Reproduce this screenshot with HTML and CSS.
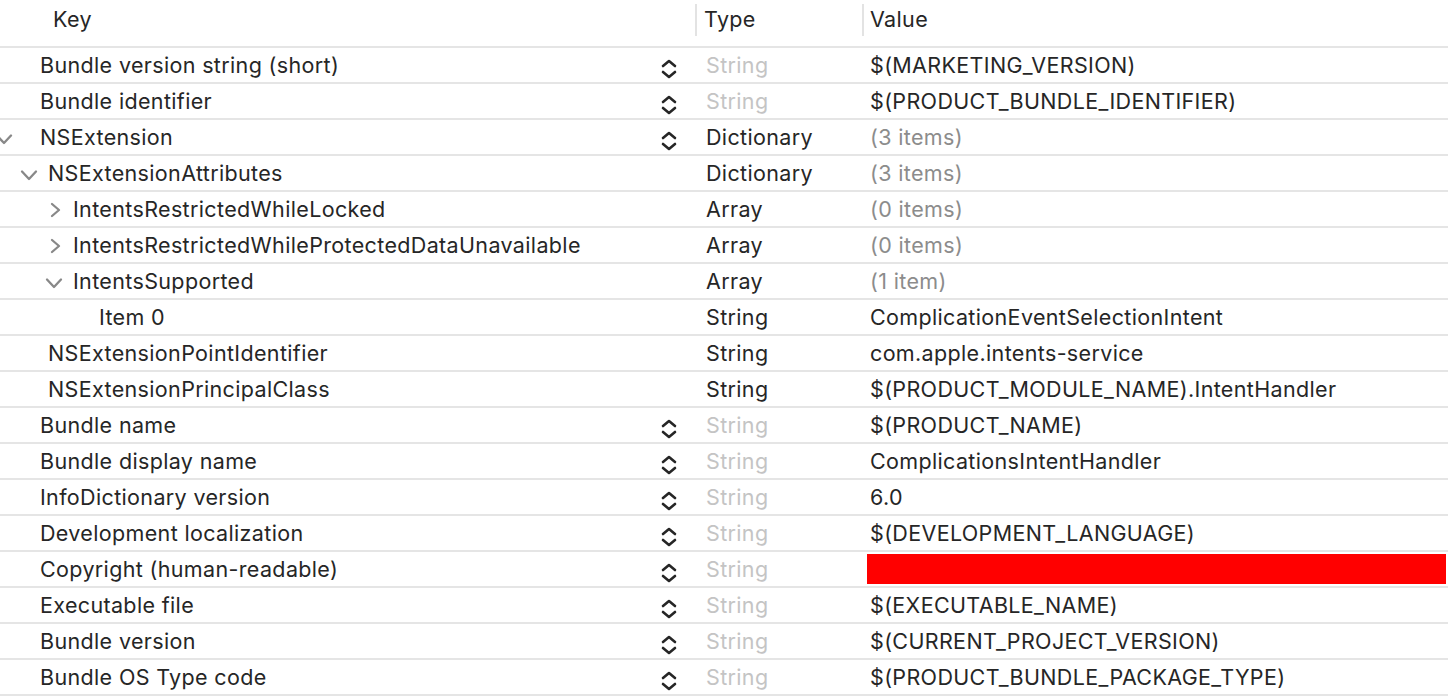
FILE: index.html
```html
<!DOCTYPE html>
<html>
<head>
<meta charset="utf-8">
<link rel="stylesheet" href="styles.css">
</head>
<body>
<div class="table">
  <div class="header">
    <div class="hcell hkey">Key</div>
    <div class="hcell htype">Type</div>
    <div class="hcell hvalue">Value</div>
  </div>

  <div class="row">
    <div class="key l0"><span class="name">Bundle version string (short)</span><svg class="stepper" viewBox="0 0 16 20"><path d="M2 7 L8 2 L14 7 M2 13 L8 18 L14 13"/></svg></div>
    <div class="type dim">String</div>
    <div class="value">$(MARKETING_VERSION)</div>
  </div>
  <div class="row">
    <div class="key l0"><span class="name">Bundle identifier</span><svg class="stepper" viewBox="0 0 16 20"><path d="M2 7 L8 2 L14 7 M2 13 L8 18 L14 13"/></svg></div>
    <div class="type dim">String</div>
    <div class="value">$(PRODUCT_BUNDLE_IDENTIFIER)</div>
  </div>
  <div class="row">
    <div class="key l0"><svg class="disc root" viewBox="0 0 22 12"><path d="M4 2.5 L11 10 L18 2.5"/></svg><span class="name">NSExtension</span><svg class="stepper" viewBox="0 0 16 20"><path d="M2 7 L8 2 L14 7 M2 13 L8 18 L14 13"/></svg></div>
    <div class="type">Dictionary</div>
    <div class="value muted">(3 items)</div>
  </div>
  <div class="row">
    <div class="key l1"><svg class="disc" viewBox="0 0 22 12"><path d="M4 2.5 L11 10 L18 2.5"/></svg><span class="name">NSExtensionAttributes</span></div>
    <div class="type">Dictionary</div>
    <div class="value muted">(3 items)</div>
  </div>
  <div class="row">
    <div class="key l2"><svg class="disc right" viewBox="0 0 22 16"><path d="M9 2 L16 8 L9 14"/></svg><span class="name">IntentsRestrictedWhileLocked</span></div>
    <div class="type">Array</div>
    <div class="value muted">(0 items)</div>
  </div>
  <div class="row">
    <div class="key l2"><svg class="disc right" viewBox="0 0 22 16"><path d="M9 2 L16 8 L9 14"/></svg><span class="name">IntentsRestrictedWhileProtectedDataUnavailable</span></div>
    <div class="type">Array</div>
    <div class="value muted">(0 items)</div>
  </div>
  <div class="row">
    <div class="key l2"><svg class="disc" viewBox="0 0 22 12"><path d="M4 2.5 L11 10 L18 2.5"/></svg><span class="name">IntentsSupported</span></div>
    <div class="type">Array</div>
    <div class="value muted">(1 item)</div>
  </div>
  <div class="row">
    <div class="key l3"><span class="spacer"></span><span class="name">Item 0</span></div>
    <div class="type">String</div>
    <div class="value">ComplicationEventSelectionIntent</div>
  </div>
  <div class="row">
    <div class="key l1"><span class="spacer"></span><span class="name">NSExtensionPointIdentifier</span></div>
    <div class="type">String</div>
    <div class="value">com.apple.intents-service</div>
  </div>
  <div class="row">
    <div class="key l1"><span class="spacer"></span><span class="name">NSExtensionPrincipalClass</span></div>
    <div class="type">String</div>
    <div class="value">$(PRODUCT_MODULE_NAME).IntentHandler</div>
  </div>
  <div class="row">
    <div class="key l0"><span class="name">Bundle name</span><svg class="stepper" viewBox="0 0 16 20"><path d="M2 7 L8 2 L14 7 M2 13 L8 18 L14 13"/></svg></div>
    <div class="type dim">String</div>
    <div class="value">$(PRODUCT_NAME)</div>
  </div>
  <div class="row">
    <div class="key l0"><span class="name">Bundle display name</span><svg class="stepper" viewBox="0 0 16 20"><path d="M2 7 L8 2 L14 7 M2 13 L8 18 L14 13"/></svg></div>
    <div class="type dim">String</div>
    <div class="value">ComplicationsIntentHandler</div>
  </div>
  <div class="row">
    <div class="key l0"><span class="name">InfoDictionary version</span><svg class="stepper" viewBox="0 0 16 20"><path d="M2 7 L8 2 L14 7 M2 13 L8 18 L14 13"/></svg></div>
    <div class="type dim">String</div>
    <div class="value">6.0</div>
  </div>
  <div class="row">
    <div class="key l0"><span class="name">Development localization</span><svg class="stepper" viewBox="0 0 16 20"><path d="M2 7 L8 2 L14 7 M2 13 L8 18 L14 13"/></svg></div>
    <div class="type dim">String</div>
    <div class="value">$(DEVELOPMENT_LANGUAGE)</div>
  </div>
  <div class="row">
    <div class="key l0"><span class="name">Copyright (human-readable)</span><svg class="stepper" viewBox="0 0 16 20"><path d="M2 7 L8 2 L14 7 M2 13 L8 18 L14 13"/></svg></div>
    <div class="type dim">String</div>
    <div class="value redact-cell"><div class="redact"></div></div>
  </div>
  <div class="row">
    <div class="key l0"><span class="name">Executable file</span><svg class="stepper" viewBox="0 0 16 20"><path d="M2 7 L8 2 L14 7 M2 13 L8 18 L14 13"/></svg></div>
    <div class="type dim">String</div>
    <div class="value">$(EXECUTABLE_NAME)</div>
  </div>
  <div class="row">
    <div class="key l0"><span class="name">Bundle version</span><svg class="stepper" viewBox="0 0 16 20"><path d="M2 7 L8 2 L14 7 M2 13 L8 18 L14 13"/></svg></div>
    <div class="type dim">String</div>
    <div class="value">$(CURRENT_PROJECT_VERSION)</div>
  </div>
  <div class="row">
    <div class="key l0"><span class="name">Bundle OS Type code</span><svg class="stepper" viewBox="0 0 16 20"><path d="M2 7 L8 2 L14 7 M2 13 L8 18 L14 13"/></svg></div>
    <div class="type dim">String</div>
    <div class="value">$(PRODUCT_BUNDLE_PACKAGE_TYPE)</div>
  </div>
</div>
</body>
</html>
```

FILE: styles.css
```css
html, body {
  margin: 0;
  padding: 0;
  background: #ffffff;
  overflow: hidden;
}
body {
  font-family: "Inter", "Noto Sans", sans-serif;
  font-size: 21.5px;
  letter-spacing: 0.35px;
  color: #262626;
  width: 1448px;
  height: 696px;
}
.table {
  display: flex;
  flex-direction: column;
}
.header {
  display: grid;
  grid-template-columns: 695px 167px 1fr;
  height: 46px;
  border-bottom: 2px solid #e5e5e5;
  box-sizing: content-box;
}
.hcell {
  display: flex;
  align-items: center;
  height: 32px;
  margin-top: 4px;
  line-height: 1;
}
.hkey { padding-left: 53px; }
.htype { border-left: 2px solid #e3e3e3; padding-left: 7px; }
.hvalue { border-left: 2px solid #e3e3e3; padding-left: 6px; }

.row {
  display: grid;
  grid-template-columns: 696px 166px 1fr;
  height: 34px;
  border-bottom: 2px solid #e5e5e5;
  box-sizing: content-box;
}
.key, .type, .value {
  display: flex;
  align-items: center;
  white-space: nowrap;
  line-height: 1;
  padding-top: 2px;
  box-sizing: border-box;
}
.key { padding-right: 19px; }
.l0 { padding-left: 40px; }
.l1 { padding-left: 18px; }
.l2 { padding-left: 43px; }
.l3 { padding-left: 69px; }
.disc, .spacer {
  flex: none;
  width: 22px;
  height: 12px;
  margin-right: 8px;
  margin-top: 2px;
}
.disc path {
  fill: none;
  stroke: #888888;
  stroke-width: 2.3;
  stroke-linecap: round;
  stroke-linejoin: round;
}
.disc.right {
  height: 16px;
  margin-top: 0;
}
.disc.root {
  margin-left: -47px;
  margin-right: 25px;
}
.stepper {
  flex: none;
  margin-left: auto;
  width: 16px;
  height: 20px;
  margin-top: 6px;
}
.stepper path {
  fill: none;
  stroke: #262626;
  stroke-width: 2.6;
  stroke-linecap: round;
  stroke-linejoin: round;
}
.type { padding-left: 10px; }
.value { padding-left: 8px; }
.dim { color: #c4c4c4; }
.muted { color: #8c8c8c; }
.redact-cell {
  padding-left: 5px;
  padding-right: 2px;
  align-items: stretch;
  padding-top: 2px;
  padding-bottom: 2px;
}
.redact {
  flex: 1;
  background: #ff0000;
}
```
